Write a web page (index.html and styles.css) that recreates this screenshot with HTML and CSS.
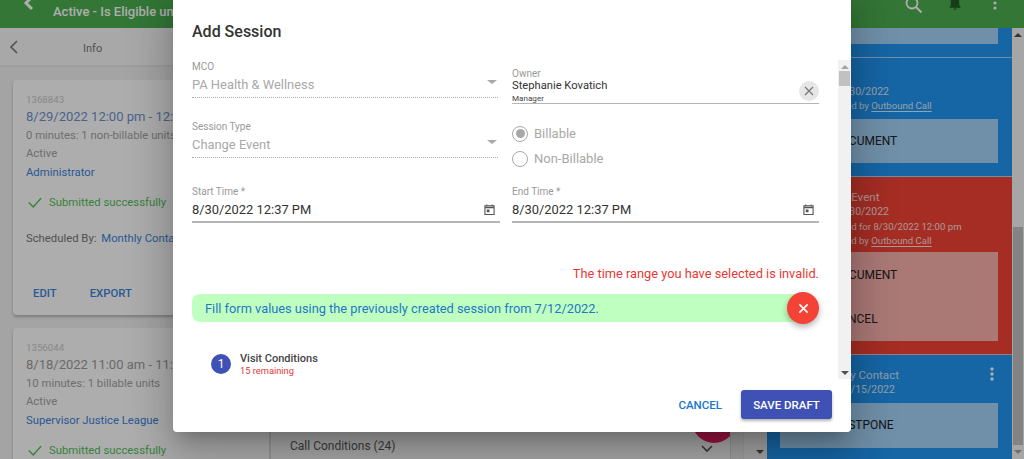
FILE: index.html
```html
<!DOCTYPE html>
<html lang="en">
<head>
<meta charset="utf-8">
<title>Add Session</title>
<link rel="stylesheet" href="styles.css">
</head>
<body>
<div class="app">
  <header class="topbar">
    <div class="topbar-left">
      <svg class="back" viewBox="0 0 16 16"><path d="M11 1 5 7l6 6" fill="none" stroke="#fff" stroke-width="3"/></svg>
      <span class="topbar-title">Active - Is Eligible until 12/31/2022</span>
    </div>
    <div class="topbar-icons">
      <svg class="tb-search" viewBox="0 0 20 20"><circle cx="7" cy="3" r="5.5" fill="none" stroke="#fff" stroke-width="1.8"/><path d="m11 7 5.5 5.5" stroke="#fff" stroke-width="2"/></svg>
      <svg class="tb-bell" viewBox="0 0 16 20"><path d="M2 8V0h12v8l2 2v1H0v-1zM6 12h4a2 2 0 0 1-4 0z" fill="#1f5a22"/></svg>
      <svg class="tb-kebab" viewBox="0 0 4 16"><circle cx="2" cy="3" r="1.6" fill="#fff"/><circle cx="2" cy="8" r="1.6" fill="#fff"/></svg>
    </div>
  </header>
  <div class="main">
    <aside class="left">
      <div class="subhead">
        <svg class="sub-back" viewBox="0 0 10 14"><path d="M8 1 2 7l6 6" fill="none" stroke="#777" stroke-width="1.6"/></svg>
        <span class="sub-title">Info</span>
      </div>
      <section class="card card-tall">
        <div class="c-id">1368843</div>
        <div class="c-date">8/29/2022 12:00 pm - 12:00 pm</div>
        <div class="c-line">0 minutes: 1 non-billable units</div>
        <div class="c-line">Active</div>
        <div class="c-link">Administrator</div>
        <div class="c-ok">
          <svg viewBox="0 0 16 12"><path d="m1 6 5 5 9-10" fill="none" stroke="#50bf58" stroke-width="1.6"/></svg>
          <span>Submitted successfully</span>
        </div>
        <div class="c-sched"><span>Scheduled By:</span> <span class="c-sched-link">Monthly Contact</span></div>
        <div class="c-actions"><span>EDIT</span><span>EXPORT</span></div>
      </section>
      <section class="card">
        <div class="c-id">1356044</div>
        <div class="c-date gray">8/18/2022 11:00 am - 11:10 am</div>
        <div class="c-line">10 minutes: 1 billable units</div>
        <div class="c-line">Active</div>
        <div class="c-link">Supervisor Justice League</div>
        <div class="c-ok">
          <svg viewBox="0 0 16 12"><path d="m1 6 5 5 9-10" fill="none" stroke="#50bf58" stroke-width="1.6"/></svg>
          <span>Submitted successfully</span>
        </div>
      </section>
    </aside>
    <section class="mid">
      <div class="mid-row">
        <span>Call Conditions (24)</span>
        <svg class="mid-chev" viewBox="0 0 12 8"><path d="m1 1 5 5 5-5" fill="none" stroke="#555" stroke-width="1.6"/></svg>
      </div>
      <div class="fab-pink"></div>
    </section>
    <div class="mid-strip"></div>
    <div class="mid-bar"><span class="arrow-down dark"></span></div>
    <section class="right">
      <article class="tile blue tile-1"><div class="box box-1"></div></article>
      <article class="tile blue tile-2">
        <div class="t-line date-a">8/30/2022</div>
        <div class="t-line by">Scheduled by <u>Outbound Call</u></div>
        <div class="box box-doc"><span>DOCUMENT</span></div>
      </article>
      <article class="tile red tile-3">
        <div class="t-head">Change Event</div>
        <div class="t-line date-a">8/30/2022</div>
        <div class="t-line by by2">Scheduled for 8/30/2022 12:00 pm</div>
        <div class="t-line by">Scheduled by <u>Outbound Call</u></div>
        <div class="box box-pair"><span>DOCUMENT</span><span class="sp-cancel">CANCEL</span></div>
      </article>
      <article class="tile blue tile-4">
        <div class="t-head">Monthly Contact</div>
        <div class="t-line date-a">11/15/2022</div>
        <svg class="t-kebab" viewBox="0 0 4 14"><circle cx="2" cy="2" r="1.7" fill="#fff"/><circle cx="2" cy="7" r="1.7" fill="#fff"/><circle cx="2" cy="12" r="1.7" fill="#fff"/></svg>
        <div class="box box-post"><span>POSTPONE</span></div>
      </article>
    </section>
    <div class="page-bar">
      <span class="arrow-up dark"></span>
      <div class="page-thumb"></div>
      <span class="arrow-down mid-a"></span>
    </div>
  </div>
</div>

<div class="scrim"></div>

<div class="modal" role="dialog" aria-label="Add Session">
  <h2 class="modal-title">Add Session</h2>
  <div class="modal-scroll">
    <div class="modal-body">
      <div class="form-grid">
        <div class="field select">
          <label>MCO</label>
          <div class="value muted">PA Health &amp; Wellness</div>
          <span class="caret"></span>
        </div>
        <div class="owner">
          <label>Owner</label>
          <div class="owner-name">Stephanie Kovatich</div>
          <div class="owner-role">Manager</div>
          <span class="clear"><svg viewBox="0 0 10 10"><path d="m1 1 8 8M9 1 1 9" stroke="#777" stroke-width="1.2"/></svg></span>
        </div>
        <div class="field select">
          <label>Session Type</label>
          <div class="value muted">Change Event</div>
          <span class="caret"></span>
        </div>
        <div class="radios">
          <div class="radio on"><span class="dot"></span>Billable</div>
          <div class="radio"><span class="dot"></span>Non-Billable</div>
        </div>
        <div class="field time start">
          <label>Start Time *</label>
          <div class="value">8/30/2022 12:37 PM</div>
          <svg class="cal" viewBox="0 0 12 12"><path d="M1 2h10v9.500H1zM1 4h10" fill="none" stroke="#555" stroke-width="1.2"/><path d="M3 .5v2M9 .5v2" stroke="#555" stroke-width="1.2"/><rect x="3" y="6" width="3" height="3" fill="#555"/></svg>
        </div>
        <div class="field time">
          <label>End Time *</label>
          <div class="value">8/30/2022 12:37 PM</div>
          <svg class="cal" viewBox="0 0 12 12"><path d="M1 2h10v9.500H1zM1 4h10" fill="none" stroke="#555" stroke-width="1.2"/><path d="M3 .5v2M9 .5v2" stroke="#555" stroke-width="1.2"/><rect x="3" y="6" width="3" height="3" fill="#555"/></svg>
        </div>
      </div>
      <p class="error">The time range you have selected is invalid.</p>
      <div class="banner">
        <span>Fill form values using the previously created session from 7/12/2022.</span>
        <span class="banner-close"><svg viewBox="0 0 12 12"><path d="m1.500 1.500 9 9M10.500 1.500l-9 9" stroke="#fff" stroke-width="1.7"/></svg></span>
      </div>
      <div class="step">
        <span class="step-num">1</span>
        <div>
          <div class="step-title">Visit Conditions</div>
          <div class="step-sub">15 remaining</div>
        </div>
      </div>
    </div>
    <div class="modal-bar">
      <span class="arrow-up light"></span>
      <div class="modal-thumb"></div>
      <div class="bar-fill"></div>
      <span class="arrow-down dark"></span>
    </div>
  </div>
  <div class="modal-actions">
    <button class="btn-text">CANCEL</button>
    <button class="btn-save">SAVE DRAFT</button>
  </div>
</div>
</body>
</html>
```
FILE: styles.css
```css
* { box-sizing: border-box; }
html, body { margin: 0; height: 100%; }
body {
  width: 1024px; height: 459px; overflow: hidden; position: relative;
  font-family: Roboto, "Liberation Sans", sans-serif; background: #f2f2f2; color: #333;
}
.app { height: 459px; display: flex; flex-direction: column; overflow: hidden; }

.topbar {
  height: 28px; flex: none; background: #4caf50; color: #fff;
  display: flex; justify-content: space-between; overflow: hidden;
}
.topbar-left { display: flex; align-items: flex-start; }
.back { width: 16px; height: 16px; margin: -4px 0 0 21px; }
.topbar-title { margin: 4px 0 0 16px; font-size: 13px; font-weight: 500; line-height: 16px; white-space: nowrap; }
.topbar-icons { display: flex; align-items: flex-start; padding-right: 27px; }
.tb-search { width: 20px; height: 20px; margin-right: 1px; }
.tb-bell { width: 14px; height: 14px; margin: 0 0 0 22px; }
.tb-kebab { width: 4px; height: 16px; margin: 0 0 0 31px; }

.main { flex: 1; display: flex; min-height: 0; }

.left { width: 270px; flex: none; background: #f2f2f2; overflow: hidden; }
.subhead { height: 39px; display: flex; align-items: center; border-bottom: 2px solid #e8e8e8; background: #f8f8f8; position: relative; }
.sub-back { width: 10px; height: 14px; margin-left: 9px; }
.sub-title { font-size: 11px; color: #777; margin-left: 64px; padding-top: 3px; }
.card {
  width: 256px; margin: 13px 0 0 13px; padding: 13px 13px; background: #fff;
  border-radius: 4px; box-shadow: 0 2px 3px rgba(0,0,0,.25); position: relative;
}
.card-tall { height: 235px; }
.c-id { font-size: 9.700px; line-height: 14px; color: #cacaca; }
.c-date { font-size: 13px; line-height: 20px; color: #6f93cf; white-space: nowrap; }
.c-date.gray { color: #9c9c9c; }
.c-line { font-size: 11.300px; line-height: 18px; color: #a3a3a3; white-space: nowrap; }
.c-link { font-size: 11.300px; line-height: 20px; color: #3a84dc; white-space: nowrap; }
.c-ok { display: flex; align-items: center; gap: 7px; margin: 9px 0 0 2px; height: 20px; color: #50bf58; font-size: 11.300px; white-space: nowrap; }
.c-ok svg { width: 14px; height: 11px; }
.c-sched { margin-top: 18px; font-size: 11.300px; line-height: 18px; color: #777; white-space: nowrap; }
.c-sched-link { color: #3a84dc; margin-left: 2px; }
.c-actions { display: flex; gap: 33px; margin: 38px 0 0 7px; font-size: 11.300px; font-weight: 500; color: #3a84dc; line-height: 16px; }

.mid { flex: 1; background: #f8f8f8; border-left: 1px solid #e0e0e0; position: relative; display: flex; align-items: flex-end; overflow: hidden; }
.mid-row { width: 100%; height: 27px; display: flex; align-items: center; justify-content: space-between; padding: 0 17px 0 19px; font-size: 12px; color: #585858; }
.mid-chev { width: 12px; height: 8px; margin-top: 6px; }
.fab-pink { position: absolute; right: -6px; bottom: 16px; width: 44px; height: 44px; border-radius: 50%; background: #e91e63; }
.mid-strip { width: 13px; flex: none; background: #ececec; border-left: 1px solid #d8d8d8; }
.mid-bar { width: 24px; flex: none; background: #f2f2f2; border-left: 1px solid #e4e4e4; display: flex; flex-direction: column; align-items: flex-end; justify-content: flex-end; padding: 0 3px 5px 0; }

.right { width: 245px; flex: none; background: #2196f3; overflow: hidden; display: flex; flex-direction: column; }
.tile { position: relative; flex: none; padding: 0 14px 0 13px; color: #fff; border-bottom: 1px solid rgba(255,255,255,.6); }
.blue { background: #2196f3; }
.red { background: #f44336; }
.tile-1 { height: 30px; }
.box-1 { height: 16px; }
.tile-2 { height: 119px; padding-top: 27px; }
.tile-3 { height: 178px; padding-top: 13px; }
.tile-4 { flex: 1; padding-top: 13px; border-bottom: 0; }
.box { background: rgba(255,255,255,.6); color: #222; font-size: 12px; }
.box span { display: block; width: 170px; text-align: center; }
.box-doc { height: 44px; margin-top: 6px; display: flex; align-items: center; }
.box-pair { height: 89px; margin-top: 4px; display: flex; flex-direction: column; justify-content: space-around; padding: 1px 0 0; }
.box .sp-cancel { padding-right: 20px; }
.box-post { height: 45px; margin-top: 6px; display: flex; align-items: center; padding-bottom: 1px; }
.box-post span { padding-right: 4px; }
.t-line { font-size: 10.500px; line-height: 14px; white-space: nowrap; color: rgba(255,255,255,.85); }
.t-line u { text-underline-offset: 2px; }
.t-head { font-size: 11.600px; line-height: 15px; padding-left: 34px; color: rgba(255,255,255,.8); white-space: nowrap; }
.tile-3 .t-head { padding-left: 29px; }
.date-a { padding-left: 59px; }
.by { padding-left: 32px; font-size: 9.600px; }
.by2 { margin-top: 1px; }
.t-kebab { position: absolute; right: 18px; top: 12px; width: 4px; height: 14px; }

.page-bar { width: 12px; flex: none; background: #f5f5f5; display: flex; flex-direction: column; align-items: center; position: relative; }
.page-thumb { position: absolute; left: 1px; right: 1px; top: 199px; height: 218px; background: #c1c1c1; }
.page-bar .arrow-up { margin-top: 5px; }
.page-bar .arrow-down { position: absolute; bottom: 5px; }

.arrow-up, .arrow-down { display: block; width: 0; height: 0; border-left: 4px solid transparent; border-right: 4px solid transparent; }
.arrow-up { border-bottom: 4px solid #505050; }
.arrow-down { border-top: 4px solid #505050; }
.arrow-up.light { border-bottom-color: #a3a3a3; }
.arrow-down.mid-a { border-top-color: #a3a3a3; }

.scrim { position: absolute; inset: 0; background: rgba(0,0,0,.32); }

.modal {
  position: absolute; left: 173px; top: -10px; width: 678px; height: 442px;
  background: #fff; border-radius: 4px; display: flex; flex-direction: column;
  box-shadow: 0 11px 15px -7px rgba(0,0,0,.2), 0 24px 38px 3px rgba(0,0,0,.14), 0 9px 46px 8px rgba(0,0,0,.12);
}
.modal-title { margin: 0; padding: 32px 19px 0; height: 70px; font-size: 16px; line-height: 20px; font-weight: 500; color: #333; }
.modal-scroll { height: 319px; flex: none; display: flex; }
.modal-body { flex: 1; padding: 0 19px 0; min-width: 0; overflow: hidden; }
.modal-bar { width: 13px; flex: none; background: #f1f1f1; display: flex; flex-direction: column; align-items: center; padding: 5px 0 4px; }
.modal-thumb { width: 11px; height: 15px; background: #c1c1c1; margin-top: 2px; }
.bar-fill { flex: 1; }

.form-grid { display: grid; grid-template-columns: 308px 307px; column-gap: 12px; grid-template-rows: 60px 66px 62px; }
.field { position: relative; }
.field label, .owner label { display: block; font-size: 10px; line-height: 12px; color: #999; }
.select { width: 306px; height: 38px; border-bottom: 1px dotted #aaa; }
.select label { padding-top: 1px; }
.select .value { margin-top: 3px; }
.value { font-size: 12.900px; line-height: 18px; margin-top: 2px; color: #333; }
.value.muted { color: #a8a8a8; }
.caret { position: absolute; right: 1px; top: 20px; width: 0; height: 0; border-left: 5px solid transparent; border-right: 5px solid transparent; border-top: 4px solid #a8a8a8; }
.owner { position: relative; height: 44px; border-bottom: 1px solid #b5b5b5; padding-top: 8px; }
.owner-name { font-size: 11.200px; line-height: 14px; color: #333; margin-top: -1px; }
.owner-role { font-size: 8.100px; line-height: 10px; color: #444; }
.clear { position: absolute; right: 0; top: 21px; width: 20px; height: 20px; border-radius: 50%; background: #e6e6e6; display: flex; align-items: center; justify-content: center; }
.clear svg { width: 10px; height: 10px; }
.radios { margin-top: 1px; }
.radio { display: flex; align-items: center; height: 25px; font-size: 13px; color: #a8a8a8; gap: 6px; }
.dot { width: 16px; height: 16px; border: 1.5px solid #a8a8a8; border-radius: 50%; display: block; position: relative; }
.radio.on .dot::after { content: ""; position: absolute; inset: 2.500px; background: #a8a8a8; border-radius: 50%; }
.time { height: 37px; border-bottom: 2px solid #b5b5b5; align-self: start; }
.time .value { margin-top: 3px; }
.start { width: 308px; }
.cal { position: absolute; right: 5px; top: 18px; width: 11px; height: 11px; }

.error { margin: 18px 0 0; text-align: right; font-size: 12.800px; line-height: 16px; color: #e53935; }
.banner { position: relative; height: 28px; width: 623px; margin-top: 12px; padding-left: 13px; background: #bfffbf; border-radius: 8px; display: flex; align-items: center; font-size: 12.800px; color: #1f78c8; }
.banner-close { position: absolute; right: -4px; top: -2px; width: 32px; height: 32px; border-radius: 50%; background: #f44336; display: flex; align-items: center; justify-content: center; box-shadow: 0 3px 6px rgba(0,0,0,.3); }
.banner-close svg { width: 11px; height: 11px; }
.step { display: flex; align-items: center; gap: 9px; margin: 30px 0 0 19px; }
.step-num { width: 20px; height: 20px; border-radius: 50%; background: #3f51b5; color: #fff; font-size: 12px; display: flex; align-items: center; justify-content: center; }
.step-title { font-size: 11px; line-height: 13px; font-weight: 500; color: #444; }
.step-sub { font-size: 9.300px; line-height: 11px; color: #e53935; }

.modal-actions { flex: 1; display: flex; justify-content: flex-end; align-items: flex-start; gap: 19px; padding: 11px 19px 0 0; }
.btn-text { border: 0; background: none; padding: 0; height: 29px; font: 500 11.500px Roboto, sans-serif; color: #1976d2; }
.btn-save { border: 0; width: 91px; height: 29px; background: #3f51b5; color: #fff; font: 500 11.500px Roboto, sans-serif; border-radius: 3px; box-shadow: 0 2px 3px rgba(0,0,0,.3); padding: 0; }
```
